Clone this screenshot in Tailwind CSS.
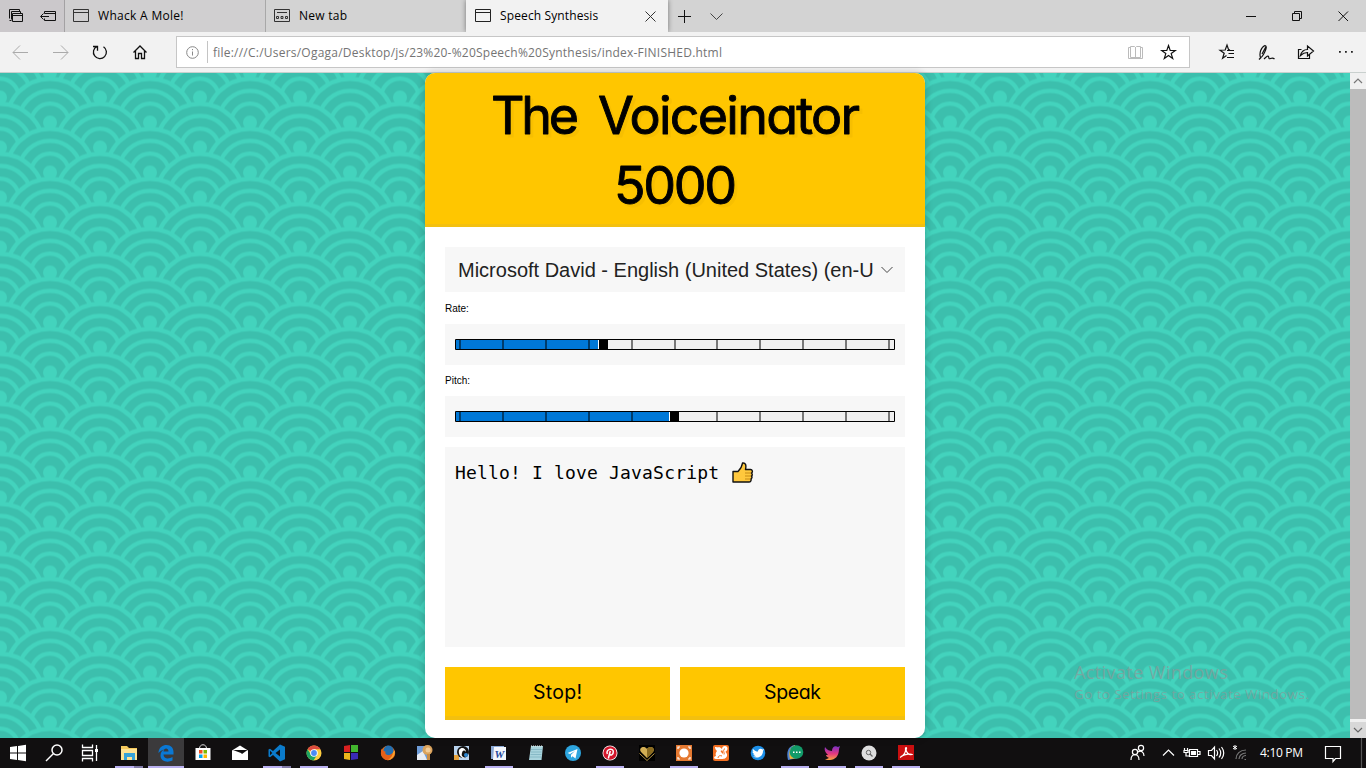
<!DOCTYPE html>
<html lang="en">
<head>
<meta charset="utf-8">
<title>Speech Synthesis</title>
<script src="https://cdn.jsdelivr.net/npm/@tailwindcss/browser@4"></script>
</head>
<body class="w-[1366px] h-[768px] overflow-hidden flex flex-col font-['Segoe_UI','Open_Sans',sans-serif] text-[12px] text-black">

<!-- Tab strip -->
<div class="h-8 flex-none flex bg-[#d3d3d3]">
  <div class="w-[65px] bg-[#cbc8cb] border-r border-[#a3a1a3] flex items-center">
    <svg width="64" height="32" fill="none" stroke="#111" stroke-width="1"><path d="M9.500 18.500v-9h10v2M11.500 20.500h-2M12.500 13.500h10v8h-10zM12.500 15.500h10M11.500 19.500v-8h9v2M41 16.500h8M43.500 13.500l-3 3 3 3M44.500 13.500v-2h11v9h-11v-2M44.500 13.500h11"/></svg>
  </div>
  <div class="w-[201px] bg-[#d0cfd0] border-r border-[#a8a8a8] flex items-center pl-2">
    <svg width="16" height="14" fill="none" stroke="#333"><path d="M.5.500h15v12h-15zM.5 3.500h15"/></svg>
    <span class="ml-[9px] text-[12px] leading-8 tracking-[0.3px]">Whack A Mole!</span>
  </div>
  <div class="w-[200px] flex items-center pl-2">
    <svg width="16" height="14" fill="none" stroke="#333"><path d="M.5.500h15v12h-15zM3 3.500h10M2.500 7.500h2v2h-2zM7 7.500h2v2h-2zM11.500 7.500h2v2h-2z"/></svg>
    <span class="ml-[9px] leading-8 tracking-[0.25px]">New tab</span>
  </div>
  <div class="w-[202px] bg-[#f2f2f2] flex items-center pl-[9px] shadow-[0_0_5px_rgba(0,0,0,0.45)]">
    <svg width="16" height="14" fill="none" stroke="#222"><path d="M.5.500h15v12h-15zM.5 3.500h15"/></svg>
    <span class="ml-[9px] leading-8 tracking-[0.12px]">Speech Synthesis</span>
    <svg class="ml-auto mr-3" width="11" height="11" stroke="#333" stroke-width="1"><path d="M.5.500l10 10M10.500.500l-10 10"/></svg>
  </div>
  <svg width="70" height="32" fill="none" stroke="#111"><path d="M10 16.500h13M16.500 10v13"/><path stroke="#444" d="M42.500 13.500l6 6 6-6"/></svg>
  <svg class="ml-auto" width="136" height="32" fill="none" stroke="#111"><path d="M16 16.500h10M62.500 13.500h7v7h-7zM64.500 13.500v-2h7v7h-2M108.500 11.500l9.500 9.500M118 11.500l-9.500 9.500"/></svg>
</div>

<!-- Address bar -->
<div class="h-[41px] flex-none flex items-center bg-[#f2f2f2] border-b border-[#c9d0ce] relative">
  <svg width="176" height="40" fill="none" stroke="#111"><g stroke="#aaa"><path d="M13 20.500h15M20 13.500l-7 7 7 7M53 20.500h15M61 13.500l7 7-7 7"/></g><g stroke-width="1.300"><path d="M103.500 14.700a6.500 6.500 0 1 1-6.500-.4M93 14.500h4.500v4.300"/><path d="M133.500 20.500l6.500-6.500 6.500 6.500M135.500 19v7.500h3v-5h3v5h3v-7.500"/></g></svg>
  <div class="w-[1014px] h-8 bg-white border border-[#c6c6c6] flex items-center">
    <svg width="30" height="30" fill="none" stroke="#888"><circle cx="15.500" cy="15.500" r="5.800"/><path d="M15.500 14.500v4M15.500 12v1.200"/></svg>
    <div class="w-px h-[22px] bg-[#c4c4c4]"></div>
    <span class="ml-[5px] text-[#747474] text-[12px] tracking-[0.225px] whitespace-nowrap pt-px">file:///C:/Users/Ogaga/Desktop/js/23%20-%20Speech%20Synthesis/index-FINISHED.html</span>
    <svg class="ml-auto" width="64" height="30" fill="none"><path stroke="#bbb" d="M5.500 10.500h-2v11h14v-11h-2M10.500 20.500h-5v-11h4l1 1 1-1h4v11h-5zM10.500 10v11"/><path stroke="#111" stroke-width="1.200" d="M43.500 8.500l1.700 4.900 5.100.1-4.100 3.100 1.500 5-4.200-3-4.200 3 1.500-5-4.100-3.100 5.100-.1z"/></svg>
  </div>
  <svg class="ml-auto" width="176" height="40" fill="none" stroke="#111" stroke-width="1.200">
    <path d="M40 17.800l-1.500-.3L37 13l-1.800 5-5.200.2 4.200 3.100-1.600 5 3.900-2.700"/><path d="M37 18.500h7M38.500 21.500h5.500M37 25.500h7"/>
    <path d="M70.500 25.500c-1.500-4 .5-10.500 4.500-12 2 .5 1.500 3-.5 7-1.500 3-3 5-4 5zM72 22l4-7.500M69 27.500l2-2M74 27c3-3 4-3.500 4.500-2.500s0 3 2 2 2.500-1 4 .5"/>
    <path d="M111.500 17.500h-3v9h11v-4M110.500 23.500c1-4 4-6 7-6v-3.500l6 5-6 5v-3.500c-3 0-5 1-7 3z"/>
    <path stroke="none" fill="#222" d="M149 19h1.800v1.800H149zM155 19h1.800v1.800H155zM161 19h1.800v1.800H161z"/>
  </svg>
</div>

<!-- Page -->
<div class="h-[665px] flex-none flex relative">
  <svg class="absolute inset-0" width="1350" height="665">
    <defs>
      <g id="wave" fill="#3cbfad" stroke="#43d3bd" stroke-width="4.300"><circle r="43.700"/><circle r="31.600"/><circle r="18.800"/><circle r="7" fill="#43d3bd" stroke="none"/></g>
      <pattern id="waves" width="100" height="50" y="24.500" patternUnits="userSpaceOnUse">
        <use href="#wave" x="0" y="0"/><use href="#wave" x="100" y="0"/>
        <use href="#wave" x="50" y="25"/>
        <use href="#wave" x="0" y="50"/><use href="#wave" x="100" y="50"/>
        <use href="#wave" x="50" y="75"/>
      </pattern>
    </defs>
    <rect width="1350" height="665" fill="url(#waves)"/>
  </svg>

  <main class="relative ml-[425px] w-[500px] h-[665px] bg-white rounded-[10px] shadow-[0_0_6px_2px_rgba(0,0,0,0.14)] overflow-hidden flex flex-col font-['Liberation_Sans',sans-serif]">
    <h1 class="h-[154px] flex-none bg-[#ffc600] border-b-[3px] border-[#f3c00f]">
      <svg width="500" height="151" class="font-['Comic_Sans_MS','Inter',cursive] [font-feature-settings:'cv11']" font-size="52" fill="#000" stroke="#000" stroke-width=".9" stroke-linejoin="round">
        <g style="filter:drop-shadow(3px 3px 0 rgba(0,0,0,0.03))">
        <text y="60.500"><tspan x="66" textLength="88">The</tspan> <tspan x="173" textLength="262">Voiceinator</tspan></text>
        <text x="189" y="130.500" textLength="123">5000</text></g>
      </svg>
    </h1>
    <div class="p-5 flex flex-col">
      <div class="h-[45px] bg-[#f7f7f7] flex items-center pl-[13px] pr-[12px] text-[20px] text-[#222]">
        <span class="w-[416px] overflow-hidden whitespace-nowrap">Microsoft David - English (United States) (en-US)</span>
        <svg class="ml-auto" width="12" height="8" fill="none" stroke="#444"><path d="M.5 1l5.500 5.500L11.500 1"/></svg>
      </div>
      <label class="h-8 leading-[33px] text-[10px]">Rate:</label>
      <div class="h-[41px] bg-[#f7f7f7] px-[10px] pt-[15px]">
        <svg class="block" width="440" height="11"><path fill="#f0f0f0" stroke="#000" d="M.5.500h439v10H.5z"/><path fill="#0078d7" d="M1 1h142v9H1z"/><path fill="#fff" d="M143 1h1v9h-1z"/><path stroke="#000" stroke-opacity=".5" stroke-width="2" d="M5 1v9M48 1v9M91 1v9M134 1v9M177 1v9M220 1v9M262 1v9M305 1v9M348 1v9M391 1v9M434 1v9"/><path d="M144 1h9v9h-9z"/></svg>
      </div>
      <label class="h-[31px] leading-[31px] text-[10px]">Pitch:</label>
      <div class="h-[41px] bg-[#f7f7f7] px-[10px] pt-[15px]">
        <svg class="block" width="440" height="11"><path fill="#f0f0f0" stroke="#000" d="M.5.500h439v10H.5z"/><path fill="#0078d7" d="M1 1h213v9H1z"/><path stroke="#000" stroke-opacity=".5" stroke-width="2" d="M5 1v9M48 1v9M91 1v9M134 1v9M177 1v9M262 1v9M305 1v9M348 1v9M391 1v9M434 1v9"/><path fill="#fff" d="M214 1h1v9h-1z"/><path d="M215 1h9v9h-9z"/></svg>
      </div>
      <div class="mt-[10px] h-[200px] bg-[#f7f7f7] px-[10px] pt-[14px] flex items-start font-['Consolas','DejaVu_Sans_Mono',monospace] text-[18px] leading-[23px]">
        <span class="whitespace-pre tracking-[0.17px]">Hello! I love JavaScript</span>
        <svg class="ml-[13px] mt-[1px]" width="22" height="22" stroke="#111" stroke-width="1.400" stroke-linejoin="round"><path fill="#ffc83d" d="M1 9.500h5c2-2 4-4.500 4.500-8.500 3-.5 4 2 3 6.500h5c2 0 2.500 2.500 1 3.500 1 1 1 2.500 0 3 .8 1 .5 2.500-.5 3 .5 1.500-.5 3-2 3H1z"/><path fill="none" stroke="#c58a16" stroke-width="1" d="M13 11h6M13 14h6M13 17h5"/></svg>
      </div>
      <div class="mt-[20px] flex gap-[10px]">
        <button class="w-[225px] h-[53px] bg-[#ffc600] border-b-[4px] border-[#f3c00f]"><svg class="block font-['Comic_Sans_MS','Inter',cursive] [font-feature-settings:'cv11']" width="225" height="49" font-size="19.500"><text x="88" y="32" textLength="49">Stop!</text></svg></button>
        <button class="w-[225px] h-[53px] bg-[#ffc600] border-b-[4px] border-[#f3c00f]"><svg class="block font-['Comic_Sans_MS','Inter',cursive] [font-feature-settings:'cv11']" width="225" height="49" font-size="19.500"><text x="84" y="32" textLength="57">Speak</text></svg></button>
      </div>
    </div>
  </main>

  <div class="absolute left-[1074px] top-[587px] text-[#8a9a98]/70 whitespace-nowrap">
    <div class="text-[18px] leading-6 tracking-[0.4px]">Activate Windows</div>
    <div class="text-[13.500px] leading-5 tracking-[0.4px]">Go to Settings to activate Windows.</div>
  </div>

  <div class="ml-auto w-4 bg-[#f0f0f0] flex flex-col">
    <svg width="16" height="16" fill="none" stroke="#777" stroke-width="1.200"><path d="M4 10l4-4 4 4"/></svg>
    <div class="h-[630px] bg-[#bcbcbc]"></div>
    <div class="mt-[3px] h-4 bg-[#d8d8d8]"><svg width="16" height="16" fill="none" stroke="#666" stroke-width="1.200"><path d="M4 6l4 4 4-4"/></svg></div>
  </div>
</div>

<!-- Taskbar -->
<div class="h-[30px] flex-none bg-[#110f10] flex text-white">
  <div class="flex gap-px">
    <svg width="36" height="30" fill="#fff"><path d="M10 9l7-1v6.500h-7zM18 7.900l8-1.100v7.700h-8zM10 15.500h7V22l-7-1zM18 15.500h8v7.700L18 22z"/></svg>
    <svg width="36" height="30" fill="none" stroke="#fff" stroke-width="1.500"><circle cx="20" cy="12" r="5"/><path d="M16.500 15.500L9 23"/></svg>
    <svg width="36" height="30" fill="none" stroke="#fff" stroke-width="1.300"><path d="M8.500 6.500v3h10v-3M8.500 12.500h10v5h-10zM8.500 23.500v-3h10v3M22.500 7v16"/><path stroke="none" fill="#fff" d="M21 11h3v3h-3z"/></svg>
    <svg width="36" height="30"><path fill="#f5c95c" d="M10 8h6l2 2h8v12H10z"/><path fill="#ffe394" d="M10 11h16v11H10z"/><path fill="#36a3d8" d="M13 15h11v7h-3v-3h-5v3h-3z"/><path fill="#b9b0f0" d="M4 28h19v2H4z"/><path fill="#817ba8" d="M23 28h9v2h-9z"/></svg>
    <svg width="36" height="30"><path fill="#3b3a3c" d="M0 0h36v30H0z"/><path fill="#0a78d4" d="M10.500 14C11.500 9 14.500 7 18.500 7c4.500 0 7 3 7 7v2.500H15.500c0 5 6 4.500 9 2.500v3.500c-5 2.500-12 1-12-5 0-3 1.500-5 3.500-6-2 .5-4 1.500-5.500 3.500zM15.500 13.500h5c0-4-4.800-4-5 0z"/><path fill="#b9b0f0" d="M0 28h36v2H0z"/></svg>
    <svg width="36" height="30"><path fill="none" stroke="#ddd" d="M14.500 10.500c0-5 7-5 7 0"/><path fill="#fff" d="M10.500 10h15v12h-15z"/><path fill="#f25022" d="M14 12h3.500v3.500H14z"/><path fill="#7fba00" d="M18.500 12H22v3.500h-3.500z"/><path fill="#00a4ef" d="M14 16.500h3.500V20H14z"/><path fill="#ffb900" d="M18.500 16.500H22V20h-3.500z"/></svg>
    <svg width="36" height="30" fill="#fff"><path d="M10 12.500l8-5 8 5V22H10z"/><path fill="#110f10" d="M11 12h14.500L20 16l-1-1z"/></svg>
    <svg width="36" height="30"><path fill="#0b7bcb" fill-rule="evenodd" d="M21 6.500l5 2.300v12.500l-5 2.200-7-6.500-3 2.300-1.500-.8v-7l1.500-.8 3 2.300zM21 11.500L16.500 15l4.500 3.500zM11 12.800v4.400l2.300-2.200z"/><path fill="#b9b0f0" d="M4 28h19v2H4z"/><path fill="#817ba8" d="M23 28h9v2h-9z"/></svg>
    <svg width="36" height="30"><circle cx="18" cy="15" r="7.500" fill="#ffcd40"/><path fill="#dd4b3e" d="M18 15L11.500 11.200A7.500 7.500 0 0 1 24.500 11.200H18z"/><path fill="#1da462" d="M11.500 11.200A7.500 7.500 0 0 0 17.500 22.500L21 17l-6-.5z"/><circle cx="18" cy="15" r="3.800" fill="#fff"/><circle cx="18" cy="15" r="2.900" fill="#4c8bf5"/><path fill="#b9b0f0" d="M4 28h28v2H4z"/></svg>
    <svg width="36" height="30"><path fill="#d92020" d="M11 8l6-1v7h-6z"/><path fill="#42b52e" d="M18 7h7v7h-7z"/><path fill="#ecb51b" d="M11 15h6v7l-6-1z"/><path fill="#3a2bb5" d="M18 15h7v6l-7 1z"/></svg>
    <svg width="36" height="30"><circle cx="18" cy="15" r="7.200" fill="#e86c16"/><circle cx="18.500" cy="12.500" r="5" fill="#236eb0"/><path fill="#e4601a" d="M11 10.500c1 2.500 3 2.500 4.500 3-1.500 4 4.500 6 9.500-1 0 13-14 12.500-14 1z"/><path fill="#f8a32c" d="M25 12.500c0 6-3 9-7 9.500 3-2 5-5 5-8z"/></svg>
    <svg width="36" height="30"><path fill="#6f9dd9" d="M10 8h13v14H10z"/><path fill="#e9edf5" d="M10 17l6-4 4 9H10z"/><circle cx="20.500" cy="12" r="5" fill="#dba35d"/><circle cx="21" cy="12" r="2.500" fill="#f2cc98"/><path fill="#c98c45" d="M20 16h3v6h-3z"/></svg>
    <svg width="36" height="30"><path fill="#b9d3ee" d="M10 8h15v14H10z"/><path fill="#e6a33d" d="M10 17h5v5h-5z"/><circle cx="19" cy="14" r="6" fill="#111"/><path fill="#fff" d="M15 12c3-4 7-1 7 2-2-2-3-2-4 1s1 4 3 5c-4 1-7-4-6-8z"/><circle cx="22" cy="17" r="2" fill="#2f87d0"/></svg>
    <svg width="36" height="30"><path fill="#8ba9d6" d="M10 8h13v13H10z"/><path fill="#f4f7fc" d="M13 9h12v13H12z"/><text x="13.500" y="20" font-size="11" font-weight="700" font-style="italic" fill="#24479b" font-family="Liberation Serif">W</text><path fill="#b9b0f0" d="M4 28h28v2H4z"/></svg>
    <svg width="36" height="30"><path fill="#a9d4dd" d="M13 8h12l-1.500 14H11z"/><path stroke="#7fb3c0" stroke-width=".8" d="M13 11.500h11M13 14h10.500M12.500 16.500h11M12 19h11"/><path stroke="#eee" stroke-dasharray="1 1" d="M13 8h12"/></svg>
    <svg width="36" height="30"><circle cx="18" cy="15" r="8" fill="#2da5df"/><path fill="#fff" d="M12.500 15l10-4-2 9.500-3-2.300-1.500 1.500v-3l4-3.700-5 3z"/></svg>
    <svg width="36" height="30"><circle cx="18" cy="15" r="7.500" fill="#fff"/><circle cx="18" cy="15" r="6.700" fill="#d3162b"/><path fill="none" stroke="#fff" stroke-width="1.500" d="M15.300 16c-2-5 6-6.500 6-2.300 0 3.500-3 4-3.500 2.500M18.300 13l-2 7.500"/><path fill="#b9b0f0" d="M4 28h28v2H4z"/></svg>
    <svg width="36" height="30"><path fill="#000" d="M10 7h16v16H10z"/><path fill="#d3ae54" d="M18 20l-6-6c-3-4 3-7 6-3 3-4 9-1 6 3z"/><path fill="#8a6b20" d="M18 11c3-4 9-1 6 3l-6 6z"/><path fill="none" stroke="#b99443" d="M10.500 15.500l7.500 7 7.500-7"/></svg>
    <svg width="36" height="30"><path fill="#e57931" d="M10 7h16v16H10z"/><circle cx="18" cy="15" r="4.600" fill="#fff"/><path fill="none" stroke="#fff" stroke-width="1.200" d="M12 11V9h2M22 9h2v2M24 19v2h-2M14 21h-2v-2"/><path fill="#b9b0f0" d="M4 28h28v2H4z"/></svg>
    <svg width="36" height="30"><rect x="10" y="7" width="16" height="16" rx="2" fill="#f36f21"/><path fill="#fff" d="M12 9c2 0 3 1 4 0l2 1 1.500 2-2 1c1 2 2 2 2.500 3 1-2-1-3-1-5 0-4 6-4 5.500 0-.3 2-2 2-2 3 1 1 2 2 1.500 4-1 3-4 3-6 3h-5c-3 0-2-3 0-3-1-2 0-4 1-5-1-1-2-2-2-4z"/><path fill="none" stroke="#f36f21" d="M22 10.500c-3 2 0 4-1 6M15 20c0-2 2-3 4-2"/></svg>
    <svg width="36" height="30"><circle cx="18" cy="15" r="7.300" fill="#1d8fe8"/><path fill="#fff" d="M13 11c2 2 3 2.500 5 2.500 0-3 3-3.500 4.500-2l1.500-.5-1 2c0 6-6 8-10 5.500h3l-3-2 1.500-.3c-1.500-1-2-1.500-2-2.700l1 .2c-1-1-1-2-.5-2.700z"/></svg>
    <svg width="36" height="30"><path fill="#4d82d5" d="M11 22c-2-8 0-14 7-15l3 13z"/><path fill="#f0b434" d="M13 21c-2-7 0-12 5-14l3 13z"/><circle cx="19.500" cy="14" r="6.800" fill="#129b69"/><path fill="#fff" d="M16 13.500h1.500V15H16zM19 13.500h1.500V15H19zM22 13.500h1.500V15H22z"/><path fill="#b9b0f0" d="M4 28h28v2H4z"/></svg>
    <svg width="36" height="30"><defs><linearGradient id="bird" x2="0" y2="1"><stop stop-color="#7630c8"/><stop offset=".55" stop-color="#e5387f"/><stop offset="1" stop-color="#f6a340"/></linearGradient></defs><path fill="url(#bird)" d="M11 9c2 3 5 4 7 4 0-4 3-6 6-4l2-1-1 3c0 7-4 11-9 11-2 0-4 0-5-1 2 0 3-.5 4-1-2-1-3-2-3-3h2c-3-3-4-5-3-8z"/><path fill="#b9b0f0" d="M4 28h28v2H4z"/></svg>
    <svg width="36" height="30"><circle cx="18" cy="15" r="7.500" fill="#dedede"/><circle cx="17.500" cy="14.500" r="2.200" fill="none" stroke="#666"/><path stroke="#666" stroke-width="1.200" d="M19 16l2.500 2.500"/><path fill="#b9b0f0" d="M4 28h28v2H4z"/></svg>
    <svg width="36" height="30"><path fill="#c90f10" d="M10 7h16v15H10z"/><path fill="none" stroke="#fff" stroke-width="1.200" d="M12 19.500c4-2 6-6 5.500-9.500 1-1 1.500 0 .5 2 1 4 3 5 6 4.500-1-1-6-.5-11 2"/><path fill="#b9b0f0" d="M4 28h28v2H4z"/></svg>
  </div>
  <svg class="ml-auto" width="127" height="30" fill="none" stroke="#fff" stroke-width="1.200">
    <g><circle cx="13" cy="14" r="2.600"/><circle cx="19" cy="10" r="2.600"/><path d="M9 22c0-7 8-7 8 0M16 14c3-2 6 0 6 4"/></g>
    <path d="M41 17.500l5.500-5.500 5.500 5.500"/>
    <path d="M67.500 11.500h8v7h-8zM76 13.500h2v3h-2M62 12.500h4v2h-4zM62.500 10v2M65.500 10v2M64 15v3h3"/><path fill="#fff" stroke="none" d="M69 13h5v4h-5z"/>
    <path d="M86.500 12.500h3l3-3.500v12l-3-3.500h-3zM94.500 12c1.500 2 1.500 4 0 6M97 10.500c2.300 3 2.300 6 0 9M99.500 9c3 4 3 8 0 12"/>
    <path stroke-width="1" d="M113 7v5M111 8l4 3M115 8l-4 3"/><path stroke="#777" d="M114 21c0-5 4-9 10-9M117 21c0-3.500 3-6 7-6M120 21c0-2 2-3.500 4-3.500M122.500 21.500h1.500"/>
  </svg>
  <span class="w-[62px] pl-[11px] text-[12px] leading-[30px] tracking-[-0.3px] whitespace-nowrap">4:10 PM</span>
  <svg width="55" height="30" fill="none" stroke="#fff" stroke-width="1.200"><path d="M14.500 8.500h15v12h-5l-2.500 3v-3h-7.500z"/><path stroke="#555" d="M50.500 0v30"/></svg>
</div>
</body>
</html>
